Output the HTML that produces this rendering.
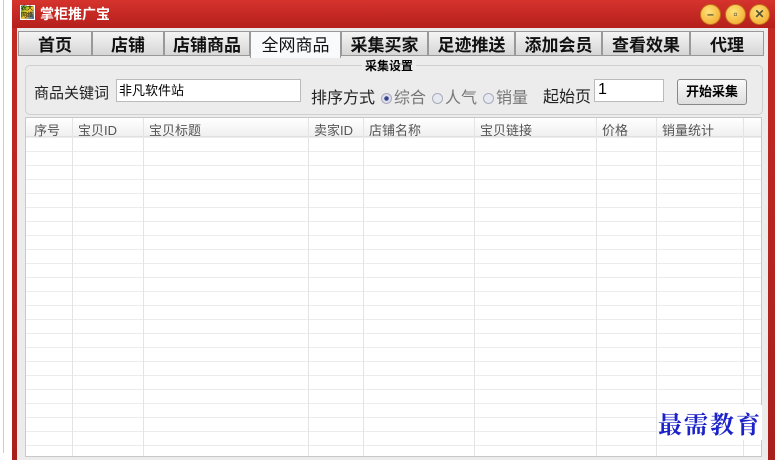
<!DOCTYPE html>
<html><head><meta charset="utf-8"><style>
*{margin:0;padding:0;box-sizing:border-box}
body{width:780px;height:453px;overflow:hidden;background:#fff;position:relative;font-family:"Liberation Sans","Noto Sans CJK SC",sans-serif;}
.a{position:absolute}
.win{left:12px;top:0;width:763px;height:460px;background:linear-gradient(#c42a24,#a8201c);border-radius:4px 4px 0 0}
.title{left:0;top:0;width:763px;height:28px;background:linear-gradient(#d6332d,#b51f1b)}
.body{left:5px;top:28px;width:751px;height:432px;background:#ececec}
.tab{top:31px;height:25px;background:linear-gradient(#f4f4f4,#d6d6d6);border:1px solid #999;font-size:17px;text-align:center;line-height:24px;color:#111;font-family:"Noto Sans CJK SC",sans-serif;font-weight:bold}
.sel{background:#f8fafc;height:27px;border-bottom:none;font-weight:normal}
.lbl{font-size:15px;color:#222}
.gr{color:#777}
.col{position:absolute;top:0;bottom:0;width:1px;background:#e4e4e4}
.hd{position:absolute;top:2px;font-size:13px;color:#555}
.btn{border:1px solid #888;border-radius:3px;background:linear-gradient(#fafafa,#dedede);font-size:13px;font-weight:bold;text-align:center;line-height:24px}
.rad{display:inline-block;width:11px;height:11px;border-radius:50%;border:1px solid #aab;background:#e6eaf0;vertical-align:-1px;margin:0 2px 0 6px}
.cb{width:21px;height:21px;border-radius:50%;top:4px;background:radial-gradient(circle at 40% 35%,#ffe27a,#f0a020);border:1px solid #c0701a;text-align:center;font-size:12px;line-height:19px;font-weight:bold;color:#553}
</style></head><body>
<div class="a" style="left:3px;top:0;width:1px;height:453px;background:#ccc"></div>
<div class="a win">
<div class="a title"></div>
<div class="a" style="left:8px;top:5px;width:15px;height:15px;background:linear-gradient(135deg,#3a3,#fc2,#36c);border:1px solid #fff;font-size:6px;line-height:7px;color:#000">农大网络</div>
<div class="a" style="left:28px;top:4px;color:#fff;font-size:14px;font-weight:bold">掌柜推广宝</div>
<div class="a cb" style="left:688px">–</div>
<div class="a cb" style="left:713px">▫</div>
<div class="a cb" style="left:737px">✕</div>
<div class="a body"></div>
</div>
<div class="a tab" style="left:18px;width:74px">首页</div>
<div class="a tab" style="left:92px;width:72px">店铺</div>
<div class="a tab" style="left:164px;width:86px">店铺商品</div>
<div class="a tab sel" style="left:250px;width:91px">全网商品</div>
<div class="a tab" style="left:341px;width:87px">采集买家</div>
<div class="a tab" style="left:428px;width:87px">足迹推送</div>
<div class="a tab" style="left:515px;width:87px">添加会员</div>
<div class="a tab" style="left:602px;width:88px">查看效果</div>
<div class="a tab" style="left:690px;width:74px">代理</div>
<div class="a" style="left:25px;top:65px;width:738px;height:50px;border:1px solid #d0d0d0;border-radius:5px"></div>
<div class="a" style="left:362px;top:57px;font-size:12px;font-weight:bold;background:#ececec;padding:0 3px">采集设置</div>
<div class="a lbl" style="left:34px;top:82px">商品关键词</div>
<div class="a" style="left:116px;top:79px;width:185px;height:23px;background:#fff;border:1px solid #bbb;font-size:13px;padding:2px 2px;line-height:17px">非凡软件站</div>
<div class="a lbl" style="left:311px;top:84px;font-size:16px">排序方式<span class="gr"><span class="rad" style="background:radial-gradient(#348 30%,#dde 40%)"></span>综合<span class="rad"></span>人气<span class="rad"></span>销量</span></div>
<div class="a lbl" style="left:543px;top:83px;font-size:16px">起始页</div>
<div class="a" style="left:594px;top:79px;width:70px;height:23px;background:#fff;border:1px solid #bbb;font-size:16px;padding:1px 3px">1</div>
<div class="a btn" style="left:677px;top:79px;width:70px;height:26px">开始采集</div>
<div class="a" style="left:25px;top:117px;width:737px;height:340px;background:#fff;border:1px solid #c8c8c8;overflow:hidden;
background-image:repeating-linear-gradient(#fff 0,#fff 13px,#ececec 13px,#ececec 14px);background-position:0 6px">
<div class="a" style="left:0;top:0;width:100%;height:19px;background:linear-gradient(#fff,#f0f0f0);border-bottom:1px solid #e0e0e0"></div>
<div class="col" style="left:46px"></div><div class="col" style="left:117px"></div><div class="col" style="left:282px"></div><div class="col" style="left:337px"></div><div class="col" style="left:448px"></div><div class="col" style="left:570px"></div><div class="col" style="left:630px"></div><div class="col" style="left:717px"></div>
<div class="hd" style="left:8px">序号</div><div class="hd" style="left:52px">宝贝ID</div><div class="hd" style="left:123px">宝贝标题</div><div class="hd" style="left:288px">卖家ID</div><div class="hd" style="left:343px">店铺名称</div><div class="hd" style="left:454px">宝贝链接</div><div class="hd" style="left:576px">价格</div><div class="hd" style="left:636px">销量统计</div>
</div>
<div class="a" style="left:658px;top:405px;font-size:24px;color:#1a22c8;font-family:'Noto Serif CJK SC',serif;font-weight:bold;letter-spacing:2px;background:#fff">最需教育</div>
</body></html>
